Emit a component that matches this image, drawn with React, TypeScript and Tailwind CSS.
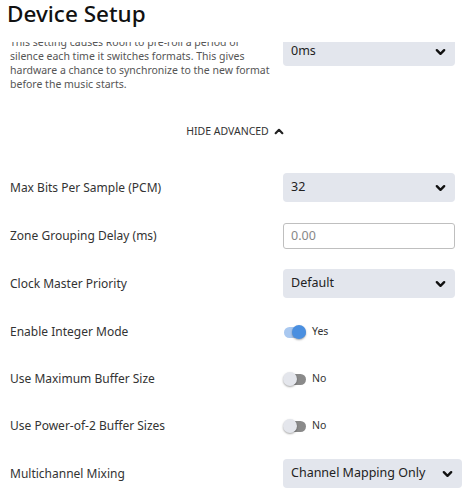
import React from "react"

function Chevron({ up = false, className = "" }: { up?: boolean; className?: string }) {
  return (
    <svg viewBox="0 0 12 8" className={className} fill="none" stroke="currentColor" strokeWidth="2.6" strokeLinecap="round" strokeLinejoin="round">
      {up ? <polyline points="2,6 6,2 10,6" /> : <polyline points="2,2 6,6 10,2" />}
    </svg>
  )
}

function Select({ value, wide = false }: { value: string; wide?: boolean }) {
  return (
    <div className={`flex h-[29px] items-center justify-between gap-3 rounded-[4px] bg-[#e3e6ed] pl-[8px] pr-[9px] text-[12.5px] text-[#222] ${wide ? "w-[179px]" : "w-[172px]"}`}>
      <span className="whitespace-nowrap">{value}</span>
      <Chevron className="h-[8px] w-[11px] shrink-0 text-[#111]" />
    </div>
  )
}

function Toggle({ on }: { on: boolean }) {
  return (
    <div className="flex items-center gap-[6px]">
      <div className="relative ml-[1px] h-[11px] w-[22px]">
        <div className={`h-[11px] w-[22px] rounded-full ${on ? "bg-[#a9c8f0]" : "bg-[#8a8a8a]"}`} />
        <div
          className={`absolute top-[-1.5px] h-[14px] w-[14px] rounded-full shadow-[0_1px_2px_rgba(0,0,0,0.35)] ${on ? "left-[8px] bg-[#4a8fe0]" : "left-[-1px] bg-[#e4e6ec]"}`}
        />
      </div>
      <span className="text-[10.5px] text-[#333]">{on ? "Yes" : "No"}</span>
    </div>
  )
}

function Row({ label, tall = true, children }: { label: string; tall?: boolean; children: React.ReactNode }) {
  return (
    <div className={`grid grid-cols-[273px_1fr] items-center ${tall ? "h-[29px]" : "h-[28px]"}`}>
      <span className="text-[12px] text-[#333]">{label}</span>
      <div className="flex items-center">{children}</div>
    </div>
  )
}

export default function App() {
  return (
    <div className="flex h-[500px] w-[474px] flex-col overflow-hidden bg-white font-['Noto_Sans',sans-serif]">
      <header className="h-[42px] shrink-0 px-[7px] pt-[2px]">
        <h1 className="text-[22.5px] font-medium leading-[24px] text-[#111]">Device Setup</h1>
      </header>

      <div className="flex-1 overflow-hidden">
        <div className="-mt-[7px] pl-[10px] pr-[12px]">
          <div className="grid grid-cols-[273px_1fr] items-start">
            <p className="pr-2 text-[10.5px] leading-[14px] text-[#555]">
              This setting causes Roon to pre-roll a period of silence each time it switches formats. This gives
              hardware a chance to synchronize to the new format before the music starts.
            </p>
            <div className="mt-[2px]">
              <Select value="0ms" />
            </div>
          </div>

          <div className="mt-[33px] flex items-center justify-center gap-[5px] pr-[2px] text-[10.5px] leading-[14px] text-[#333]">
            <span>HIDE ADVANCED</span>
            <Chevron up className="h-[7px] w-[10px] text-[#222]" />
          </div>

          <div className="mt-[35px] flex flex-col gap-[19px]">
            <Row label="Max Bits Per Sample (PCM)">
              <Select value="32" />
            </Row>
            <Row label="Zone Grouping Delay (ms)">
              <input
                placeholder="0.00"
                className="h-[26px] w-[172px] rounded-[3px] border border-[#bfbfbf] bg-white px-[7px] text-[12.5px] text-[#222] outline-none placeholder:text-[#888]"
              />
            </Row>
            <Row label="Clock Master Priority">
              <Select value="Default" />
            </Row>
            <div className="mt-[1px]">
              <Row label="Enable Integer Mode" tall={false}>
                <Toggle on />
              </Row>
            </div>
            <Row label="Use Maximum Buffer Size" tall={false}>
              <Toggle on={false} />
            </Row>
            <Row label="Use Power-of-2 Buffer Sizes" tall={false}>
              <Toggle on={false} />
            </Row>
            <Row label="Multichannel Mixing">
              <Select value="Channel Mapping Only" wide />
            </Row>
          </div>
        </div>
      </div>
    </div>
  )
}
